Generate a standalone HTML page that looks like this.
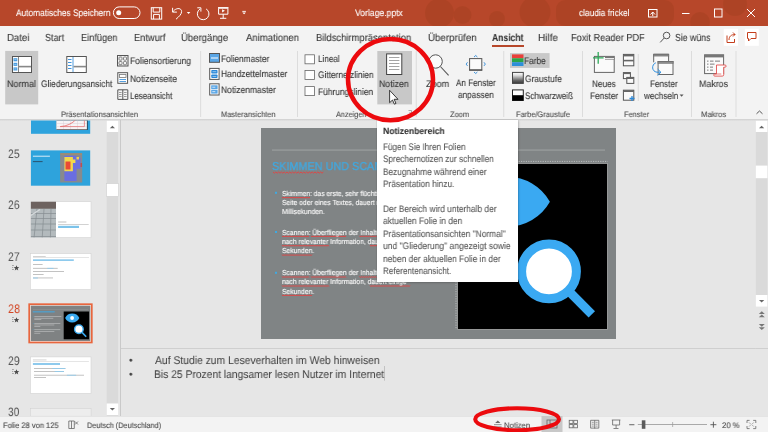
<!DOCTYPE html>
<html><head><meta charset="utf-8"><style>
html,body{margin:0;padding:0;width:768px;height:432px;overflow:hidden;background:#e6e6e6}
body{position:relative;font-family:"Liberation Sans",sans-serif}
.a{position:absolute}
.t{position:absolute;white-space:nowrap;line-height:1;font-family:"Liberation Sans",sans-serif;transform-origin:0 0;will-change:transform;-webkit-text-stroke:0.1px currentColor;text-rendering:geometricPrecision}
</style></head><body>

<svg class=a style="left:0;top:0" width="768" height="432" viewBox="0 0 768 432">
 <!-- title bar -->
 <rect x="0" y="0" width="768" height="26" fill="#b7472a"/>
 <g fill="#a3401f" opacity="0.45">
  <circle cx="439.5" cy="13" r="14.5"/><circle cx="462.5" cy="15" r="9"/><circle cx="497" cy="19" r="8"/>
  <circle cx="535" cy="12" r="15.5"/><rect x="556" y="0" width="118" height="26" rx="9"/>
  <circle cx="700" cy="22" r="10"/><circle cx="735" cy="4" r="12"/>
 </g>
 <!-- tabs + ribbon -->
 <!-- main bg -->
 <rect x="0" y="119" width="768" height="297" fill="#e6e6e6"/>
 <rect x="0" y="26" width="768" height="93" fill="#f3f3f3"/>
 <defs><linearGradient id="rsh" x1="0" y1="0" x2="0" y2="1"><stop offset="0" stop-color="#cfcfcf"/><stop offset="1" stop-color="#e6e6e6"/></linearGradient></defs>
 <rect x="0" y="119" width="768" height="2.2" fill="url(#rsh)"/>
 <!-- status bar -->
 <rect x="0" y="416" width="768" height="16" fill="#f3f3f3"/>
 <rect x="0" y="416" width="768" height="0.6" fill="#dadada"/>
 <rect x="541.5" y="416" width="21" height="16" fill="#c8c8c8"/>

 <!-- ===== title bar icons ===== -->
 <g fill="none" stroke="#fff" stroke-width="1">
  <rect x="113.4" y="6.9" width="26.6" height="11.6" rx="5.8"/>
  <rect x="151.3" y="7.7" width="10.4" height="11.4"/>
  <path d="M153.2 7.7 V12.1 H159.8 V7.7 M153.6 19.1 V14.4 H159.4 V19.1"/>
  <path d="M172.6 7.8 V12.1 H176.9 M172.6 12.1 C175.5 7.6 181.6 7.4 181.6 11.6 C181.6 14.2 179 16.6 176 19.2"/>
  <path d="M206.1 8.9 A5.8 5.8 0 1 1 199.9 9.1 M197.3 7.8 H200.9 V11.6"/>
  <path d="M218.6 14.2 V8.2 H227.9 V14.2 Z M223.2 14.2 v4 M220 18.3 h6.3"/>
  <path d="M682 13.5 h7.5"/>
  <rect x="714.5" y="9" width="7.5" height="8"/>
  <path d="M747 9 L755 17 M755 9 L747 17"/>
  <rect x="648.5" y="9.5" width="8.5" height="7.5"/>
  <path d="M650.5 14.5 L652.75 12 L655 14.5 M652.75 12 v4"/>
 </g>
 <circle cx="118.7" cy="12.7" r="2.5" fill="#fff"/>
 <path d="M186.8 12 h3.6 l-1.8 2z" fill="#fff"/>
 <path d="M222.1 9.3 v3.1 l2.8 -1.55z" fill="#fff"/>
 <rect x="218" y="7.1" width="10.5" height="1.1" fill="#fff"/>
 <rect x="242.3" y="10.9" width="3.6" height="0.9" fill="#fff"/><path d="M242.3 12.5 h3.6 l-1.8 1.8z" fill="#fff"/>

 <!-- ===== tabs row ===== -->
 <rect x="492" y="45" width="32" height="2" fill="#b7472a"/>
 <g fill="none" stroke="#555" stroke-width="1">
  <circle cx="666.6" cy="35.5" r="3.3"/>
  <path d="M664.2 38 L660.2 42.4"/>
 </g>
 <rect x="723.75" y="28.8" width="14.2" height="17" fill="#fff"/>
 <rect x="744.8" y="28.8" width="14" height="17" fill="#fff"/>
 <g fill="none" stroke="#c43e1c" stroke-width="1">
  <path d="M727 35.5 v7 h7.5 v-3.5"/>
  <path d="M729 40 C729 36.5 731 34.5 735 34.5 M733 32.5 l2 2 l-2 2"/>
  <path d="M747.5 32.5 h8.5 v6 h-5 l-2.5 2.5 v-2.5 h-1z"/>
 </g>

 <!-- ===== ribbon ===== -->
 <rect x="5.2" y="50.9" width="33" height="53.5" fill="#c8c8c8"/>
 <rect x="377.3" y="51" width="34.7" height="53.4" fill="#c8c8c8"/>
 <rect x="510" y="53.1" width="39.6" height="14.8" fill="#c8c8c8"/>
 <!-- separators -->
 <g fill="#d6d6d6">
  <rect x="200.3" y="51" width="0.8" height="66"/>
  <rect x="297.2" y="51" width="0.8" height="66"/>
  <rect x="415.8" y="51" width="0.8" height="66"/>
  <rect x="503.4" y="51" width="0.8" height="66"/>
  <rect x="582.2" y="51" width="0.8" height="66"/>
  <rect x="637.8" y="54" width="0.8" height="47"/>
  <rect x="691.1" y="51" width="0.8" height="66"/>
  <rect x="735.6" y="51" width="0.8" height="66"/>
 </g>
 <!-- Normal icon -->
 <rect x="12.5" y="56.5" width="19" height="16" fill="#fff" stroke="#555" stroke-width="1"/>
 <rect x="18" y="57" width="0.9" height="15" fill="#777"/>
 <rect x="18.5" y="65.8" width="12.5" height="1.6" fill="#888"/>
 <rect x="13.5" y="58.2" width="3.8" height="3.1" fill="#4a9de0"/>
 <rect x="13.5" y="62.8" width="3.8" height="3.1" fill="#4a9de0"/>
 <rect x="13.5" y="67.4" width="3.8" height="3.1" fill="#4a9de0"/>
 <g fill="#cfe6fa"><rect x="14.3" y="59.5" width="2.2" height="0.5"/><rect x="14.3" y="64.1" width="2.2" height="0.5"/><rect x="14.3" y="68.7" width="2.2" height="0.5"/></g>
 <!-- Gliederung icon -->
 <rect x="66.8" y="56.5" width="19.5" height="16" fill="#fff" stroke="#555" stroke-width="1"/>
 <rect x="72.6" y="57" width="0.8" height="15" fill="#2b88d8"/>
 <rect x="73.5" y="65.8" width="12.5" height="1.6" fill="#888"/>
 <g fill="#2b88d8"><rect x="68" y="59" width="3.5" height="0.9"/><rect x="68" y="62" width="3.5" height="0.9"/><rect x="68" y="65" width="3.5" height="0.9"/><rect x="68" y="68" width="3.5" height="0.9"/></g>
 <!-- Foliensortierung -->
 <rect x="117.5" y="55.5" width="10.5" height="10.5" fill="#f3f3f3" stroke="#555" stroke-width="1"/>
 <g fill="none" stroke="#666" stroke-width="0.8"><rect x="119" y="57" width="3" height="3.2" rx="0.8"/><rect x="123.5" y="57" width="3" height="3.2" rx="0.8"/><rect x="119" y="61.5" width="3" height="3.2" rx="0.8"/><rect x="123.5" y="61.5" width="3" height="3.2" rx="0.8"/></g>
 <!-- Notizenseite -->
 <rect x="117.8" y="72.7" width="9.8" height="10.6" fill="#fff" stroke="#555" stroke-width="1"/>
 <rect x="119.5" y="74.5" width="6.5" height="3" fill="#fff" stroke="#777" stroke-width="0.8"/>
 <rect x="119.5" y="79" width="6.5" height="0.8" fill="#2b88d8"/><rect x="119.5" y="81" width="6.5" height="0.8" fill="#2b88d8"/>
 <!-- Leseansicht -->
 <path d="M117.8 89.8 h10 v9.6 h-10z M122.8 89.8 v10.2" fill="#f6f6f6" stroke="#555" stroke-width="1"/>
 <g fill="#777"><rect x="119" y="92" width="2.6" height="0.7"/><rect x="119" y="94" width="2.6" height="0.7"/><rect x="119" y="96" width="2.6" height="0.7"/><rect x="124" y="92" width="2.6" height="0.7"/><rect x="124" y="94" width="2.6" height="0.7"/><rect x="124" y="96" width="2.6" height="0.7"/></g>
 <!-- Folienmaster -->
 <rect x="209.5" y="53.5" width="10" height="8.8" fill="#5aa6e6" stroke="#555" stroke-width="1"/>
 <rect x="211" y="57.5" width="7" height="1" fill="#fff"/>
 <!-- Handzettelmaster -->
 <rect x="209.7" y="68.4" width="9.4" height="11" fill="#fff" stroke="#555" stroke-width="1"/>
 <rect x="211.3" y="70" width="6.2" height="3.5" rx="0.7" fill="#2b88d8"/><rect x="211.3" y="74.5" width="6.2" height="3.5" rx="0.7" fill="#2b88d8"/>
 <g fill="#cfe5f7"><rect x="212.5" y="71.5" width="3.8" height="0.6"/><rect x="212.5" y="76" width="3.8" height="0.6"/></g>
 <!-- Notizenmaster -->
 <rect x="209.7" y="83.8" width="9.4" height="11.2" fill="#fff" stroke="#555" stroke-width="1"/>
 <rect x="211.2" y="85.3" width="6.4" height="4" fill="#5aa6e6"/><rect x="211.2" y="90" width="6.4" height="3.6" fill="#5aa6e6"/>
 <g fill="#fff"><rect x="212.3" y="86.8" width="3" height="0.7"/><rect x="212.3" y="91.4" width="3" height="0.7"/></g>
 <!-- checkboxes -->
 <g fill="#fff" stroke="#666" stroke-width="0.8">
  <rect x="305" y="54.8" width="9.4" height="9"/>
  <rect x="305" y="70.4" width="9.4" height="9"/>
  <rect x="305" y="86.6" width="9.4" height="9"/>
 </g>
 <!-- Notizen page icon -->
 <rect x="386.6" y="53.9" width="15.2" height="20.6" fill="#fff" stroke="#444" stroke-width="1"/>
 <g fill="#9a9a9a"><rect x="389" y="57" width="10.4" height="0.9"/><rect x="389" y="60" width="10.4" height="0.9"/><rect x="389" y="63" width="10.4" height="0.9"/><rect x="389" y="66" width="10.4" height="0.9"/><rect x="389" y="69" width="10.4" height="0.9"/></g>
 <!-- launcher -->
 <path d="M408.5 110.5 h3 v3 M409.5 112.5 l2 1" fill="none" stroke="#888" stroke-width="0.7"/>
 <!-- Zoom icon -->
 <circle cx="435.6" cy="61.5" r="6.7" fill="#fafafa" stroke="#555" stroke-width="1"/>
 <path d="M440.4 66.5 L448.6 75.4" stroke="#555" stroke-width="1.1"/>
 <!-- An Fenster -->
 <rect x="469.6" y="58.6" width="12.2" height="11.6" fill="#fafafa" stroke="#555" stroke-width="1"/>
 <rect x="469.2" y="69.3" width="13" height="1.3" fill="#555"/>
 <g fill="none" stroke="#2b88d8" stroke-width="0.9">
  <path d="M474 57 l1.7 -1.5 l1.7 1.5"/><path d="M474 72 l1.7 1.5 l1.7 -1.5"/>
  <path d="M467.5 62.3 l-1.3 1.8 l1.3 1.8"/><path d="M484 62.3 l1.3 1.8 l-1.3 1.8"/>
 </g>
 <!-- Farbe icons -->
 <rect x="512" y="54.4" width="11.5" height="3.9" fill="#e8403a"/>
 <rect x="512" y="58.3" width="11.5" height="3.9" fill="#2aa548"/>
 <rect x="512" y="62.2" width="11.5" height="3.8" fill="#2d8fd8"/>
 <defs><linearGradient id="gs" x1="0" y1="0" x2="0" y2="1">
  <stop offset="0" stop-color="#fff"/><stop offset="0.25" stop-color="#e0e0e0"/><stop offset="0.5" stop-color="#a0a0a0"/><stop offset="0.75" stop-color="#606060"/><stop offset="1" stop-color="#3a3a3a"/></linearGradient></defs>
 <rect x="512.5" y="72.4" width="10.8" height="11" fill="url(#gs)" stroke="#444" stroke-width="1"/>
 <rect x="512.5" y="89.9" width="10.8" height="10.6" fill="#fff" stroke="#222" stroke-width="1"/>
 <rect x="512.5" y="95.2" width="10.8" height="5.3" fill="#000"/>
 <!-- Neues Fenster -->
 <rect x="594.4" y="56.4" width="19.8" height="16" fill="#fafafa" stroke="#666" stroke-width="1"/>
 <rect x="605" y="56.4" width="9.5" height="3.2" fill="#777"/>
 <rect x="604" y="58" width="10" height="0.9" fill="#fafafa"/>
 <path d="M593 57.8 h10.6 M598.2 52 v11.7" stroke="#2faa5a" stroke-width="1.3"/>
 <!-- small window icons -->
 <g fill="#fafafa" stroke="#555" stroke-width="1">
  <rect x="623.4" y="54.4" width="10.4" height="11.4"/>
  <rect x="623.4" y="72.6" width="7" height="6"/>
  <rect x="626.8" y="77.4" width="7" height="6"/>
  <rect x="623.4" y="90.2" width="10.4" height="10"/>
 </g>
 <g fill="#666"><rect x="623.4" y="54.4" width="10.4" height="2"/><rect x="623.4" y="59.8" width="10.4" height="1.6"/>
  <rect x="623.4" y="72.6" width="7" height="1.5"/><rect x="626.8" y="77.4" width="7" height="1.6"/><rect x="623.4" y="90.2" width="10.4" height="1.8"/></g>
 <path d="M629.5 98.5 h5 M632 96 v5" stroke="#2b88d8" stroke-width="1.3"/>
 <!-- Fenster wechseln -->
 <path d="M653.7 62.3 V54.3 H668.6 V61.2" fill="#fafafa" stroke="#666" stroke-width="1"/>
 <rect x="653.2" y="53.8" width="15.9" height="2.6" fill="#707070"/>
 <rect x="653.9" y="54.9" width="14.5" height="0.5" fill="#a8a8a8"/>
 <rect x="658.1" y="61.5" width="14.9" height="13" fill="#fafafa" stroke="#666" stroke-width="1"/>
 <rect x="657.6" y="61" width="15.9" height="2.7" fill="#707070"/>
 <rect x="658.3" y="62.1" width="14.5" height="0.5" fill="#a8a8a8"/>
 <path d="M655.8 62.8 C651.3 64.6 651.5 71.6 657 72.2 H660.6" fill="none" stroke="#2b8ee0" stroke-width="1"/>
 <path d="M657.7 69.1 L660.8 72.2 L657.7 75.6" fill="none" stroke="#2b8ee0" stroke-width="1"/>
 <path d="M679.6 94.6 h4 l-2 2.2z" fill="#555"/>
 <!-- Makros -->
 <rect x="704.6" y="54.8" width="19" height="18.8" fill="#fafafa" stroke="#666" stroke-width="1"/>
 <rect x="704.6" y="54.8" width="19" height="2.6" fill="#777"/>
 <g fill="#999"><rect x="707" y="60.5" width="1.5" height="1.3"/><rect x="710" y="60.5" width="3.5" height="1.3"/><rect x="715" y="60.5" width="5" height="1.3"/>
  <rect x="707" y="63.5" width="1.5" height="1.3"/><rect x="710" y="63.5" width="4.5" height="1.3"/>
  <rect x="707" y="66.5" width="1.5" height="1.3"/><rect x="710" y="66.5" width="3" height="1.3"/>
  <rect x="707" y="69.5" width="1.5" height="1.3"/><rect x="710" y="69.5" width="3" height="1.3"/></g>
 <path d="M716.5 65 h8.5 a1.1 1.1 0 0 1 0 2.2 h-1.3 v7.5 a1.4 1.4 0 0 1 -1.4 1.4 h-7.5 a1.1 1.1 0 0 1 0 -2.2 h1.7z" fill="#fff" stroke="#e2504f" stroke-width="0.9"/><path d="M714.8 74 h6.5" stroke="#e2504f" stroke-width="0.7"/>
 <!-- collapse chevron -->
 <path d="M756.5 113.8 l3 -2.8 l3 2.8" fill="none" stroke="#555" stroke-width="1"/>

 <!-- ===== thumbnails panel ===== -->
 <rect x="106.7" y="120.8" width="11.5" height="295" fill="#dadada"/>
 <rect x="106.7" y="120.8" width="11.5" height="11.2" fill="#fff"/>
 <path d="M109.8 128.3 h5.2 l-2.6 -2.6z" fill="#666"/>
 <rect x="106.5" y="183.6" width="12" height="12.8" fill="#fff" stroke="#cfcfcf" stroke-width="0.6"/>
 <rect x="106.7" y="403.5" width="11.5" height="11.5" fill="#fff"/>
 <path d="M109.8 408 h5.2 l-2.6 2.6z" fill="#666"/>
 <rect x="120" y="120" width="0.9" height="296" fill="#c6c6c6"/>

 <!-- ===== editor scrollbar ===== -->
 <rect x="755.8" y="120.8" width="11.6" height="186" fill="#dadada"/>
 <rect x="755.8" y="120.8" width="11.6" height="11.2" fill="#fff"/>
 <path d="M759 128.3 h5.2 l-2.6 -2.6z" fill="#666"/>
 <rect x="755.8" y="165.6" width="11.6" height="12.6" fill="#fff"/>
 <rect x="755.8" y="295" width="11.6" height="11.7" fill="#fff"/>
 <path d="M759 300 h5.2 l-2.6 2.6z" fill="#666"/>
 <g fill="#777">
  <path d="M758.8 314 h6 l-3 -2.8z M758.8 317.3 h6 l-3 -2.8z"/>
  <path d="M758.8 324 h6 l-3 2.8z M758.8 327.3 h6 l-3 2.8z"/>
 </g>
 <rect x="384.3" y="366" width="0.6" height="14.7" fill="#aaaaaa"/>
 <!-- notes divider -->
 <rect x="121" y="348" width="634.8" height="1" fill="#cfcfcf"/>
 <rect x="755.8" y="348" width="12.2" height="1" fill="#cfcfcf"/>

 <!-- ===== status bar icons ===== -->
 <g fill="none" stroke="#666" stroke-width="0.8">
  <path d="M68.8 421 h5.5 v7.5 h-5.5z M71.5 421 v7.5"/>
  <path d="M75 421.5 l3 3 M78 421.5 l-3 3"/>
  <rect x="547" y="420" width="10" height="8"/>
  <path d="M550 420 v8 M550 424 h7"/>
  <rect x="569.2" y="420.3" width="3.8" height="3.2"/><rect x="573.8" y="420.3" width="3.8" height="3.2"/>
  <rect x="569.2" y="424.6" width="3.8" height="3.2"/><rect x="573.8" y="424.6" width="3.8" height="3.2"/>
  <path d="M590.6 420.3 h8.2 v7.8 h-8.2z M594.7 420.3 v8.2"/>
  <path d="M591.8 422.3 h2 M591.8 424.2 h2 M591.8 426.1 h2 M595.6 422.3 h2 M595.6 424.2 h2 M595.6 426.1 h2" stroke-width="0.6"/>
  <path d="M611.8 420 h8.6 M612.6 420 v5 h7 v-5 M616.1 425 v3 M613.5 428.5 h5"/>
 </g>
 <path d="M494 424.5 h7.6 M494 426.3 h7.6 M494 428 h7.6" stroke="#666" stroke-width="0.6"/>
 <path d="M495.2 423 l2.6 -2.4 l2.6 2.4z" fill="#666"/>
 <rect x="629.2" y="424.3" width="5.2" height="0.9" fill="#555"/>
 <rect x="637.8" y="424.3" width="69.2" height="0.7" fill="#888"/>
 <rect x="672.4" y="422" width="0.7" height="5" fill="#999"/>
 <rect x="641.8" y="420.3" width="3.6" height="8.5" fill="#5a5a5a"/>
 <path d="M710.4 424.7 h6 M713.4 421.7 v6" stroke="#555" stroke-width="0.9"/>
 <path d="M747 423 v-2.6 h2.6 M753.2 420.4 h2.6 v2.6 M755.8 426 v2.6 h-2.6 M749.6 428.6 h-2.6 v-2.6" fill="none" stroke="#666" stroke-width="0.8"/>
 <path d="M749 422.4 l1.8 1.8 M753.8 422.4 l-1.8 1.8 M749 426.6 l1.8 -1.8 M753.8 426.6 l-1.8 -1.8" stroke="#777" stroke-width="0.6"/>
</svg>

<svg class=a style="left:0;top:0" width="768" height="432" viewBox="0 0 768 432">
 <defs><clipPath id="panelclip"><rect x="0" y="120.6" width="106" height="295.4"/></clipPath></defs>
 <g clip-path="url(#panelclip)">
 <!-- slide 24 (partial) -->
 <rect x="31" y="120" width="59.2" height="13.8" fill="#2ea3dd"/>
 <rect x="56.6" y="119" width="31" height="11" fill="#2a2a2a"/>
 <rect x="56.3" y="119" width="30.6" height="10.4" fill="#f6f4f6"/>
 <g stroke="#d8c8d0" stroke-width="0.4"><path d="M63.5 119v10 M70.5 119v10 M77.5 119v10 M57 123.5h30 M57 126.5h30"/></g>
 <path d="M60.2 126.6 Q70 126 76.3 119.2" stroke="#e86a6a" stroke-width="0.8" fill="none"/>
 <path d="M60.2 126.6 H84.4 V119" stroke="#e86a6a" stroke-width="0.7" fill="none"/>
 <!-- slide 25 -->
 <rect x="30.9" y="150.4" width="59.3" height="35.3" fill="#2ea3dc"/>
 <rect x="60.1" y="153" width="22.1" height="29.5" fill="#878a8e"/>
 <defs><filter id="bl6" x="-20%" y="-20%" width="140%" height="140%"><feGaussianBlur stdDeviation="0.7"/></filter><clipPath id="hmclip"><rect x="60.1" y="153" width="22.1" height="29.5"/></clipPath></defs>
 <g clip-path="url(#hmclip)"><g filter="url(#bl6)">
 <path d="M64.4 155.7 h12.2 v2 h4 v11 h-4 v12.3 h-12.2z" fill="#6a6ee0"/>
 <rect x="60.5" y="153.2" width="21.5" height="1.8" fill="#9c8c74"/>
 <path d="M64.4 157 h8.5 v2.5 h2.5 v3.5 h-2.5 v8.3 h-8.5z" fill="#f2d84c"/>
 <rect x="65.5" y="161.5" width="5" height="8" fill="#ea4a36"/>
 <rect x="76.5" y="157" width="2.5" height="2.5" fill="#f0d24a"/>
 <rect x="80.5" y="163" width="1.8" height="4" fill="#c05050"/>
 </g></g>
 <rect x="32.9" y="155.7" width="17" height="1" fill="#d8ecf8"/>
 <rect x="32.9" y="161.1" width="9.7" height="1" fill="#2a5570"/>
 <!-- slide 26 -->
 <rect x="30.9" y="201.7" width="60.1" height="35.9" fill="#fff" stroke="#d2d2d2" stroke-width="0.6"/>
 <defs><linearGradient id="kb" x1="0" y1="0" x2="0.2" y2="1"><stop offset="0" stop-color="#9aa2a6"/><stop offset="0.5" stop-color="#b4bbbe"/><stop offset="1" stop-color="#a0a7aa"/></linearGradient></defs>
 <defs><clipPath id="kbclip"><rect x="30.9" y="201.7" width="25.1" height="35.9"/></clipPath><filter id="bl5" x="-20%" y="-20%" width="140%" height="140%"><feGaussianBlur stdDeviation="0.45"/></filter></defs>
 <g clip-path="url(#kbclip)"><g filter="url(#bl5)">
 <rect x="30" y="201" width="27" height="37" fill="#b3babd"/>
 <g stroke="#858d91" stroke-width="0.7" fill="none"><path d="M30 213.5 h27 M30 218.5 h27 M30 224 h27 M30 230 h27 M30 236.5 h27"/><path d="M37 209 l-3 29 M44 209 l-1.8 29 M51 209 l-0.6 29"/></g>
 <path d="M30 216 L40 209.5" stroke="#d5dadc" stroke-width="1.3"/>
 <rect x="30" y="201" width="27" height="7.7" fill="#6d625e"/>
 </g></g>
 <rect x="58.1" y="221.6" width="8.3" height="0.8" fill="#b0b0b0"/>
 <rect x="58.1" y="224" width="30.6" height="0.45" fill="#9a9a9a"/>
 <rect x="58.1" y="225.8" width="20.9" height="2.2" fill="#7cc3ea"/>
 <!-- slide 27 -->
 <rect x="30.3" y="253.6" width="60.7" height="36" fill="#fff" stroke="#d2d2d2" stroke-width="0.6"/>
 <rect x="33" y="256.2" width="12.7" height="0.7" fill="#c0c0c0"/>
 <rect x="33" y="257.4" width="56" height="0.35" fill="#b5b5b5"/>
 <rect x="33" y="259.5" width="40.8" height="1.2" fill="#5fb4e6"/>
 <g fill="#a8a8a8"><rect x="33" y="264.3" width="9.6" height="0.7"/><rect x="33" y="267.9" width="24.7" height="0.7"/><rect x="33" y="271.3" width="31" height="0.7"/><rect x="33" y="274.2" width="10.6" height="0.7"/><rect x="33" y="277.6" width="20" height="0.7"/></g>
 <g fill="#8ccbef"><rect x="47.3" y="267.9" width="6.2" height="0.8"/><rect x="33" y="277.6" width="4.9" height="0.8"/></g>
 <!-- slide 28 selected -->
 <rect x="29.2" y="304.2" width="62.6" height="38.3" fill="#f4e6e0" stroke="#e8663e" stroke-width="1.7"/>
 <rect x="30.8" y="305.7" width="59.5" height="35.3" fill="#7f8283"/>
 <rect x="33" y="309" width="55" height="0.4" fill="#999c9d"/>
 <rect x="32.8" y="311.3" width="21.9" height="1.1" fill="#45a6dc"/>
 <g fill="#c9cbcb"><rect x="34.3" y="316.4" width="27" height="0.55"/><rect x="34.3" y="317.9" width="19" height="0.55"/><rect x="34.3" y="319.4" width="7" height="0.55"/>
  <rect x="34.3" y="323.2" width="26" height="0.55"/><rect x="34.3" y="324.7" width="20" height="0.55"/><rect x="34.3" y="326.2" width="6" height="0.55"/>
  <rect x="34.3" y="329.5" width="26" height="0.55"/><rect x="34.3" y="331" width="20" height="0.55"/><rect x="34.3" y="332.9" width="6" height="0.55"/></g>
 <g fill="#45a6dc"><rect x="33.2" y="316.3" width="0.6" height="0.6"/><rect x="33.2" y="323.1" width="0.6" height="0.6"/><rect x="33.2" y="329.4" width="0.6" height="0.6"/></g>
 <rect x="63.7" y="311.5" width="25.4" height="27.8" fill="#000"/>
 <path d="M65.1 318 A7.9 7.9 0 0 1 79.3 318 A7.9 7.9 0 0 1 65.1 318z" fill="#3aaaf0"/>
 <circle cx="72.1" cy="318" r="1.9" fill="#fff"/>
 <circle cx="78.9" cy="329.2" r="4.3" fill="#fff" stroke="#3aaaf0" stroke-width="1.4"/>
 <path d="M82 332.4 L86.2 336.8" stroke="#3aaaf0" stroke-width="1.6"/>
 <!-- slide 29 -->
 <rect x="30.4" y="356.9" width="60.6" height="36.5" fill="#fff" stroke="#d2d2d2" stroke-width="0.6"/>
 <rect x="32.9" y="359.6" width="13.6" height="0.7" fill="#c0c0c0"/>
 <rect x="32.9" y="361.1" width="56" height="0.35" fill="#b5b5b5"/>
 <rect x="32.9" y="363.3" width="27.1" height="1.4" fill="#5fb4e6"/>
 <g fill="#a8a8a8"><rect x="34" y="368.1" width="31.4" height="0.7"/><rect x="34" y="371.2" width="30" height="0.7"/><rect x="34" y="374.8" width="50" height="0.7"/><rect x="34" y="377" width="12" height="0.7"/></g>
 <g fill="#8ccbef"><rect x="52.3" y="368.1" width="13.1" height="0.8"/><rect x="54.7" y="371.2" width="9.3" height="0.8"/><rect x="66.9" y="374.8" width="9.2" height="0.8"/></g>
 <!-- slide 30 partial -->
 <rect x="30.3" y="408.7" width="60.8" height="7.5" fill="#ededed" stroke="#d0d0d0" stroke-width="0.5"/>
 </g>
 <!-- stars -->
 <path d="M16.50 265.20 L17.23 267.09 L19.26 267.20 L17.69 268.49 L18.20 270.45 L16.50 269.35 L14.80 270.45 L15.31 268.49 L13.74 267.20 L15.77 267.09z M16.50 317.20 L17.23 319.09 L19.26 319.20 L17.69 320.49 L18.20 322.45 L16.50 321.35 L14.80 322.45 L15.31 320.49 L13.74 319.20 L15.77 319.09z M16.50 369.20 L17.23 371.09 L19.26 371.20 L17.69 372.49 L18.20 374.45 L16.50 373.35 L14.80 374.45 L15.31 372.49 L13.74 371.20 L15.77 371.09z" fill="#4a4a4a"/>
 <g fill="#8a8a8a"><rect x="12" y="265.2" width="1.9" height="0.7"/><rect x="12" y="267.1" width="1.2" height="0.7"/><rect x="12" y="269" width="1.9" height="0.7"/><rect x="12" y="317.2" width="1.9" height="0.7"/><rect x="12" y="319.1" width="1.2" height="0.7"/><rect x="12" y="321" width="1.9" height="0.7"/><rect x="12" y="369.2" width="1.9" height="0.7"/><rect x="12" y="371.1" width="1.2" height="0.7"/><rect x="12" y="373" width="1.9" height="0.7"/></g>
</svg>
<div class=t style="left:15.50px;top:8.96px;font-size:9.50px;transform:scaleX(0.8769);color:#ffffff;">Automatisches Speichern</div>
<div class=t style="left:355.00px;top:8.96px;font-size:9.50px;transform:scaleX(0.9057);color:#ffffff;">Vorlage.pptx</div>
<div class=t style="left:579.42px;top:8.96px;font-size:9.50px;transform:scaleX(0.8748);color:#ffffff;">claudia frickel</div>
<div class=t style="left:7.23px;top:33.77px;font-size:10.20px;transform:scaleX(0.9436);color:#383838;">Datei</div>
<div class=t style="left:45.39px;top:33.77px;font-size:10.20px;transform:scaleX(0.8863);color:#383838;">Start</div>
<div class=t style="left:81.01px;top:33.77px;font-size:10.20px;transform:scaleX(0.9067);color:#383838;">Einfügen</div>
<div class=t style="left:134.26px;top:33.77px;font-size:10.20px;transform:scaleX(0.9102);color:#383838;">Entwurf</div>
<div class=t style="left:181.33px;top:33.77px;font-size:10.20px;transform:scaleX(0.9364);color:#383838;">Übergänge</div>
<div class=t style="left:245.75px;top:33.77px;font-size:10.20px;transform:scaleX(0.9353);color:#383838;">Animationen</div>
<div class=t style="left:316.25px;top:33.77px;font-size:10.20px;transform:scaleX(0.9235);color:#383838;">Bildschirmpräsentation</div>
<div class=t style="left:428.32px;top:33.77px;font-size:10.20px;transform:scaleX(0.9549);color:#383838;">Überprüfen</div>
<div class=t style="left:538.20px;top:33.77px;font-size:10.20px;transform:scaleX(0.9755);color:#383838;">Hilfe</div>
<div class=t style="left:571.26px;top:33.77px;font-size:10.20px;transform:scaleX(0.9038);color:#383838;">Foxit Reader PDF</div>
<div class=t style="left:675.45px;top:33.77px;font-size:10.20px;transform:scaleX(0.8580);color:#383838;">Sie wüns</div>
<div class=t style="left:492.08px;top:33.77px;font-size:10.20px;transform:scaleX(0.8408);color:#333;font-weight:700;">Ansicht</div>
<div class=t style="left:6.98px;top:79.86px;font-size:9.50px;transform:scaleX(0.9465);color:#383838;">Normal</div>
<div class=t style="left:40.58px;top:79.86px;font-size:9.50px;transform:scaleX(0.8767);color:#383838;">Gliederungsansicht</div>
<div class=t style="left:129.52px;top:57.36px;font-size:9.50px;transform:scaleX(0.8979);color:#383838;">Foliensortierung</div>
<div class=t style="left:129.52px;top:74.66px;font-size:9.50px;transform:scaleX(0.8999);color:#383838;">Notizenseite</div>
<div class=t style="left:129.57px;top:91.91px;font-size:9.50px;transform:scaleX(0.8346);color:#383838;">Leseansicht</div>
<div class=t style="left:61.31px;top:111.03px;font-size:8.00px;transform:scaleX(0.9260);color:#4e4e4e;">Präsentationsansichten</div>
<div class=t style="left:221.23px;top:54.86px;font-size:9.50px;transform:scaleX(0.8792);color:#383838;">Folienmaster</div>
<div class=t style="left:221.22px;top:70.46px;font-size:9.50px;transform:scaleX(0.8917);color:#383838;">Handzettelmaster</div>
<div class=t style="left:221.22px;top:86.06px;font-size:9.50px;transform:scaleX(0.8963);color:#383838;">Notizenmaster</div>
<div class=t style="left:221.31px;top:110.83px;font-size:8.00px;transform:scaleX(0.9287);color:#4e4e4e;">Masteransichten</div>
<div class=t style="left:318.10px;top:55.26px;font-size:9.50px;transform:scaleX(0.8519);color:#383838;">Lineal</div>
<div class=t style="left:318.33px;top:71.46px;font-size:9.50px;transform:scaleX(0.8780);color:#383838;">Gitternetzlinien</div>
<div class=t style="left:318.08px;top:87.76px;font-size:9.50px;transform:scaleX(0.8857);color:#383838;">Führungslinien</div>
<div class=t style="left:335.81px;top:111.23px;font-size:8.00px;transform:scaleX(0.9125);color:#4e4e4e;">Anzeigen</div>
<div class=t style="left:379.10px;top:80.06px;font-size:9.50px;transform:scaleX(0.9186);color:#383838;">Notizen</div>
<div class=t style="left:426.03px;top:80.06px;font-size:9.50px;transform:scaleX(0.9615);color:#383838;">Zoom</div>
<div class=t style="left:455.90px;top:79.36px;font-size:9.50px;transform:scaleX(0.8545);color:#383838;">An Fenster</div>
<div class=t style="left:457.87px;top:91.26px;font-size:9.50px;transform:scaleX(0.8663);color:#383838;">anpassen</div>
<div class=t style="left:450.17px;top:111.23px;font-size:8.00px;transform:scaleX(0.9388);color:#4e4e4e;">Zoom</div>
<div class=t style="left:524.33px;top:57.26px;font-size:9.50px;transform:scaleX(0.8771);color:#383838;">Farbe</div>
<div class=t style="left:524.58px;top:74.66px;font-size:9.50px;transform:scaleX(0.8827);color:#383838;">Graustufe</div>
<div class=t style="left:524.68px;top:91.76px;font-size:9.50px;transform:scaleX(0.8489);color:#383838;">Schwarzweiß</div>
<div class=t style="left:516.21px;top:111.43px;font-size:8.00px;transform:scaleX(0.9281);color:#4e4e4e;">Farbe/Graustufe</div>
<div class=t style="left:592.04px;top:80.16px;font-size:9.50px;transform:scaleX(0.8631);color:#383838;">Neues</div>
<div class=t style="left:589.83px;top:91.91px;font-size:9.50px;transform:scaleX(0.8780);color:#383838;">Fenster</div>
<div class=t style="left:649.85px;top:80.16px;font-size:9.50px;transform:scaleX(0.8588);color:#383838;">Fenster</div>
<div class=t style="left:643.78px;top:91.91px;font-size:9.50px;transform:scaleX(0.8655);color:#383838;">wechseln</div>
<div class=t style="left:624.21px;top:110.63px;font-size:8.00px;transform:scaleX(0.9288);color:#4e4e4e;">Fenster</div>
<div class=t style="left:699.29px;top:80.16px;font-size:9.50px;transform:scaleX(0.9303);color:#383838;">Makros</div>
<div class=t style="left:701.08px;top:110.63px;font-size:8.00px;transform:scaleX(0.9627);color:#4e4e4e;">Makros</div>
<div class=t style="left:8.08px;top:147.71px;font-size:12.40px;transform:scaleX(0.8333);color:#555;-webkit-text-stroke:0;">25</div>
<div class=t style="left:8.08px;top:199.21px;font-size:12.40px;transform:scaleX(0.8333);color:#555;-webkit-text-stroke:0;">26</div>
<div class=t style="left:8.08px;top:251.20px;font-size:12.52px;transform:scaleX(0.8333);color:#555;-webkit-text-stroke:0;">27</div>
<div class=t style="left:8.08px;top:354.60px;font-size:12.52px;transform:scaleX(0.8333);color:#555;-webkit-text-stroke:0;">29</div>
<div class=t style="left:8.30px;top:406.41px;font-size:12.16px;transform:scaleX(0.8333);color:#555;-webkit-text-stroke:0;">30</div>
<div class=t style="left:8.06px;top:303.17px;font-size:12.44px;transform:scaleX(0.8696);color:#d24726;-webkit-text-stroke:0;">28</div>
<div class=t style="left:128.98px;top:355.61px;font-size:11.33px;transform:scaleX(0.9091);color:#444;">•</div>
<div class=t style="left:128.98px;top:369.81px;font-size:11.33px;transform:scaleX(0.9091);color:#444;">•</div>
<div class=t style="left:154.60px;top:355.72px;font-size:11.20px;transform:scaleX(0.9246);color:#444;-webkit-text-stroke:0.04px currentColor;">Auf Studie zum Leseverhalten im Web hinweisen</div>
<div class=t style="left:153.78px;top:370.12px;font-size:11.20px;transform:scaleX(0.9207);color:#444;-webkit-text-stroke:0.04px currentColor;">Bis 25 Prozent langsamer lesen Nutzer im Internet</div>
<div class=t style="left:2.70px;top:421.93px;font-size:8.00px;transform:scaleX(0.9395);color:#484848;">Folie 28 von 125</div>
<div class=t style="left:87.32px;top:421.93px;font-size:8.00px;transform:scaleX(0.9103);color:#484848;">Deutsch (Deutschland)</div>
<div class=t style="left:504.19px;top:421.93px;font-size:8.00px;transform:scaleX(0.9602);color:#484848;">Notizen</div>
<div class=t style="left:721.61px;top:421.93px;font-size:8.00px;transform:scaleX(0.9658);color:#484848;">20 %</div>

<div class=a style="left:261px;top:128px;width:355.2px;height:210.8px;background:#808485;overflow:hidden">
 <svg class=a style="left:0;top:0" width="356" height="211" viewBox="261 128 356 211">
  <rect x="272" y="149.6" width="333" height="0.9" fill="#a4a7a8"/>
  <rect x="457.6" y="163.4" width="149.8" height="166" fill="#000" stroke="#a9abab" stroke-width="0.8"/>
  <path d="M456.2 161.4 H607.8 M456 161.4 V329.5" stroke="#c8caca" stroke-width="0.8" stroke-dasharray="1.2 1.2" fill="none"/>
  <path d="M464.8 201.7 A48.75 48.75 0 0 1 549.9 201.7 A48.75 48.75 0 0 1 464.8 201.7z" fill="#3aa9f2"/>
  <circle cx="549" cy="271.4" r="27.4" fill="#fff" stroke="#3aa9f2" stroke-width="9"/>
  <path d="M570 292.4 L591.8 314.4" stroke="#3aa9f2" stroke-width="9"/>
  <path d="M273.00 172.00 L274.40 173.20 L275.80 172.00 L277.20 173.20 L278.60 172.00 L280.00 173.20 L281.40 172.00 L282.80 173.20 L284.20 172.00 L285.60 173.20 L287.00 172.00 L288.40 173.20 L289.80 172.00 L291.20 173.20 L292.60 172.00 L294.00 173.20 L295.40 172.00 L296.80 173.20 L298.20 172.00 L299.60 173.20 L301.00 172.00 L302.40 173.20 L303.80 172.00 L305.20 173.20 L306.60 172.00 L308.00 173.20 L309.40 172.00 L310.80 173.20 L312.20 172.00 L313.60 173.20 L315.00 172.00 L316.40 173.20 L317.80 172.00 L319.20 173.20 L320.60 172.00 L322.00 173.20 L323.40 172.00 M281.90 197.05 L282.90 198.15 L283.90 197.05 L284.90 198.15 L285.90 197.05 L286.90 198.15 L287.90 197.05 L288.90 198.15 L289.90 197.05 L290.90 198.15 L291.90 197.05 L292.90 198.15 L293.90 197.05 L294.90 198.15 L295.90 197.05 L296.90 198.15 L297.90 197.05 L298.90 198.15 L299.90 197.05 L300.90 198.15 L301.90 197.05 L302.90 198.15 L303.90 197.05 L304.90 198.15 L305.90 197.05 L306.90 198.15 L307.90 197.05 L308.90 198.15 L309.90 197.05 M282.00 235.85 L283.00 236.95 L284.00 235.85 L285.00 236.95 L286.00 235.85 L287.00 236.95 L288.00 235.85 L289.00 236.95 L290.00 235.85 L291.00 236.95 L292.00 235.85 L293.00 236.95 L294.00 235.85 L295.00 236.95 L296.00 235.85 L297.00 236.95 L298.00 235.85 L299.00 236.95 L300.00 235.85 L301.00 236.95 L302.00 235.85 L303.00 236.95 L304.00 235.85 L305.00 236.95 L306.00 235.85 L307.00 236.95 L308.00 235.85 L309.00 236.95 M311.00 235.85 L312.00 236.95 L313.00 235.85 L314.00 236.95 L315.00 235.85 L316.00 236.95 L317.00 235.85 L318.00 236.95 L319.00 235.85 L320.00 236.95 L321.00 235.85 L322.00 236.95 L323.00 235.85 L324.00 236.95 L325.00 235.85 L326.00 236.95 L327.00 235.85 L328.00 236.95 L329.00 235.85 L330.00 236.95 L331.00 235.85 L332.00 236.95 L333.00 235.85 L334.00 236.95 L335.00 235.85 L336.00 236.95 L337.00 235.85 L338.00 236.95 L339.00 235.85 L340.00 236.95 L341.00 235.85 L342.00 236.95 L343.00 235.85 L344.00 236.95 L345.00 235.85 L346.00 236.95 M359.40 235.85 L360.40 236.95 L361.40 235.85 L362.40 236.95 L363.40 235.85 L364.40 236.95 L365.40 235.85 L366.40 236.95 L367.40 235.85 L368.40 236.95 L369.40 235.85 L370.40 236.95 L371.40 235.85 L372.40 236.95 L373.40 235.85 L374.40 236.95 L375.40 235.85 L376.40 236.95 M282.00 245.15 L283.00 246.25 L284.00 245.15 L285.00 246.25 L286.00 245.15 L287.00 246.25 L288.00 245.15 L289.00 246.25 L290.00 245.15 L291.00 246.25 L292.00 245.15 L293.00 246.25 L294.00 245.15 L295.00 246.25 L296.00 245.15 L297.00 246.25 L298.00 245.15 L299.00 246.25 L300.00 245.15 L301.00 246.25 L302.00 245.15 L303.00 246.25 L304.00 245.15 L305.00 246.25 L306.00 245.15 L307.00 246.25 L308.00 245.15 L309.00 246.25 L310.00 245.15 L311.00 246.25 L312.00 245.15 L313.00 246.25 L314.00 245.15 L315.00 246.25 L316.00 245.15 L317.00 246.25 L318.00 245.15 L319.00 246.25 L320.00 245.15 L321.00 246.25 L322.00 245.15 L323.00 246.25 L324.00 245.15 L325.00 246.25 L326.00 245.15 L327.00 246.25 L328.00 245.15 L329.00 246.25 M370.00 245.15 L371.00 246.25 L372.00 245.15 L373.00 246.25 L374.00 245.15 L375.00 246.25 L376.00 245.15 L377.00 246.25 M282.00 254.55 L283.00 255.65 L284.00 254.55 L285.00 255.65 L286.00 254.55 L287.00 255.65 L288.00 254.55 L289.00 255.65 L290.00 254.55 L291.00 255.65 L292.00 254.55 L293.00 255.65 L294.00 254.55 L295.00 255.65 L296.00 254.55 L297.00 255.65 L298.00 254.55 L299.00 255.65 L300.00 254.55 L301.00 255.65 L302.00 254.55 L303.00 255.65 L304.00 254.55 L305.00 255.65 L306.00 254.55 L307.00 255.65 L308.00 254.55 L309.00 255.65 L310.00 254.55 L311.00 255.65 L312.00 254.55 M282.00 276.45 L283.00 277.55 L284.00 276.45 L285.00 277.55 L286.00 276.45 L287.00 277.55 L288.00 276.45 L289.00 277.55 L290.00 276.45 L291.00 277.55 L292.00 276.45 L293.00 277.55 L294.00 276.45 L295.00 277.55 L296.00 276.45 L297.00 277.55 L298.00 276.45 L299.00 277.55 L300.00 276.45 L301.00 277.55 L302.00 276.45 L303.00 277.55 L304.00 276.45 L305.00 277.55 L306.00 276.45 L307.00 277.55 L308.00 276.45 L309.00 277.55 M311.00 276.45 L312.00 277.55 L313.00 276.45 L314.00 277.55 L315.00 276.45 L316.00 277.55 L317.00 276.45 L318.00 277.55 L319.00 276.45 L320.00 277.55 L321.00 276.45 L322.00 277.55 L323.00 276.45 L324.00 277.55 L325.00 276.45 L326.00 277.55 L327.00 276.45 L328.00 277.55 L329.00 276.45 L330.00 277.55 L331.00 276.45 L332.00 277.55 L333.00 276.45 L334.00 277.55 L335.00 276.45 L336.00 277.55 L337.00 276.45 L338.00 277.55 L339.00 276.45 L340.00 277.55 L341.00 276.45 L342.00 277.55 L343.00 276.45 L344.00 277.55 L345.00 276.45 L346.00 277.55 M359.40 276.45 L360.40 277.55 L361.40 276.45 L362.40 277.55 L363.40 276.45 L364.40 277.55 L365.40 276.45 L366.40 277.55 L367.40 276.45 L368.40 277.55 L369.40 276.45 L370.40 277.55 L371.40 276.45 L372.40 277.55 L373.40 276.45 L374.40 277.55 L375.40 276.45 L376.40 277.55 M282.00 285.45 L283.00 286.55 L284.00 285.45 L285.00 286.55 L286.00 285.45 L287.00 286.55 L288.00 285.45 L289.00 286.55 L290.00 285.45 L291.00 286.55 L292.00 285.45 L293.00 286.55 L294.00 285.45 L295.00 286.55 L296.00 285.45 L297.00 286.55 L298.00 285.45 L299.00 286.55 L300.00 285.45 L301.00 286.55 L302.00 285.45 L303.00 286.55 L304.00 285.45 L305.00 286.55 L306.00 285.45 L307.00 286.55 L308.00 285.45 L309.00 286.55 L310.00 285.45 L311.00 286.55 L312.00 285.45 L313.00 286.55 L314.00 285.45 L315.00 286.55 L316.00 285.45 L317.00 286.55 L318.00 285.45 L319.00 286.55 L320.00 285.45 L321.00 286.55 L322.00 285.45 L323.00 286.55 L324.00 285.45 L325.00 286.55 L326.00 285.45 L327.00 286.55 L328.00 285.45 L329.00 286.55 M370.00 285.45 L371.00 286.55 L372.00 285.45 L373.00 286.55 L374.00 285.45 L375.00 286.55 L376.00 285.45 L377.00 286.55 L378.00 285.45 L379.00 286.55 L380.00 285.45 L381.00 286.55 L382.00 285.45 L383.00 286.55 L384.00 285.45 L385.00 286.55 L386.00 285.45 L387.00 286.55 L388.00 285.45 L389.00 286.55 L390.00 285.45 L391.00 286.55 L392.00 285.45 L393.00 286.55 L394.00 285.45 L395.00 286.55 L396.00 285.45 L397.00 286.55 L398.00 285.45 L399.00 286.55 L400.00 285.45 L401.00 286.55 L402.00 285.45 L403.00 286.55 L404.00 285.45 L405.00 286.55 L406.00 285.45 L407.00 286.55 L408.00 285.45 L409.00 286.55 L410.00 285.45 M282.00 294.85 L283.00 295.95 L284.00 294.85 L285.00 295.95 L286.00 294.85 L287.00 295.95 L288.00 294.85 L289.00 295.95 L290.00 294.85 L291.00 295.95 L292.00 294.85 L293.00 295.95 L294.00 294.85 L295.00 295.95 L296.00 294.85 L297.00 295.95 L298.00 294.85 L299.00 295.95 L300.00 294.85 L301.00 295.95 L302.00 294.85 L303.00 295.95 L304.00 294.85 L305.00 295.95 L306.00 294.85 L307.00 295.95 L308.00 294.85 L309.00 295.95 L310.00 294.85 L311.00 295.95 L312.00 294.85" fill="none" stroke="#e04545" stroke-width="0.95"/>
  <g fill="#3fa9e1"><rect x="275" y="191.8" width="2" height="2"/><rect x="275" y="231" width="2" height="2"/><rect x="275" y="271.8" width="2" height="2"/></g>
 </svg>
 <div class=a style="left:-261px;top:-128px;width:768px;height:432px">
 <div class=t style="left:272.35px;top:162.07px;font-size:11.38px;transform:scaleX(0.9524);color:#3fa9e1;-webkit-text-stroke:0.3px currentColor;">SKIMMEN UND SCANNEN</div>
<div class=t style="left:281.50px;top:189.85px;font-size:7.27px;transform:scaleX(0.9259);color:#fbfbfb;-webkit-text-stroke:0.1px currentColor;">Skimmen: das erste, sehr flüchtige Betrachten einer</div>
<div class=t style="left:281.50px;top:199.25px;font-size:7.27px;transform:scaleX(0.9259);color:#fbfbfb;-webkit-text-stroke:0.1px currentColor;">Seite oder eines Textes, dauert nur wenige</div>
<div class=t style="left:281.50px;top:208.25px;font-size:7.27px;transform:scaleX(0.9259);color:#fbfbfb;-webkit-text-stroke:0.1px currentColor;">Millisekunden.</div>
<div class=t style="left:281.50px;top:228.65px;font-size:7.27px;transform:scaleX(0.9259);color:#fbfbfb;-webkit-text-stroke:0.1px currentColor;">Scannen: Überfliegen der Inhalte einer Seite</div>
<div class=t style="left:281.50px;top:238.00px;font-size:7.27px;transform:scaleX(0.9259);color:#fbfbfb;-webkit-text-stroke:0.1px currentColor;">nach relevanter Information, dauert einige</div>
<div class=t style="left:281.50px;top:247.35px;font-size:7.27px;transform:scaleX(0.9259);color:#fbfbfb;-webkit-text-stroke:0.1px currentColor;">Sekunden.</div>
<div class=t style="left:281.50px;top:269.25px;font-size:7.27px;transform:scaleX(0.9259);color:#fbfbfb;-webkit-text-stroke:0.1px currentColor;">Scannen: Überfliegen der Inhalte einer Seite</div>
<div class=t style="left:281.50px;top:278.25px;font-size:7.27px;transform:scaleX(0.9259);color:#fbfbfb;-webkit-text-stroke:0.1px currentColor;">nach relevanter Information, dauert einige</div>
<div class=t style="left:281.50px;top:287.65px;font-size:7.27px;transform:scaleX(0.9259);color:#fbfbfb;-webkit-text-stroke:0.1px currentColor;">Sekunden.</div>
 </div>
</div>

<div class=a style="left:377px;top:119.7px;width:140.7px;height:162.3px;background:#fff;box-shadow:0 0 1.5px rgba(0,0,0,0.25), 1px 1px 2px rgba(0,0,0,0.15)">
 <div class=a style="left:-377px;top:-119.7px;width:768px;height:432px">
 <div class=t style="left:382.78px;top:126.58px;font-size:9.00px;transform:scaleX(0.9570);color:#333;font-weight:700;">Notizenbereich</div>
<div class=t style="left:382.65px;top:142.76px;font-size:9.50px;transform:scaleX(0.8595);color:#5a5a5a;">Fügen Sie Ihren Folien</div>
<div class=t style="left:382.97px;top:155.26px;font-size:9.50px;transform:scaleX(0.8669);color:#5a5a5a;">Sprechernotizen zur schnellen</div>
<div class=t style="left:382.64px;top:167.76px;font-size:9.50px;transform:scaleX(0.8707);color:#5a5a5a;">Bezugnahme während einer</div>
<div class=t style="left:382.63px;top:180.16px;font-size:9.50px;transform:scaleX(0.8779);color:#5a5a5a;">Präsentation hinzu.</div>
<div class=t style="left:382.63px;top:205.06px;font-size:9.50px;transform:scaleX(0.8808);color:#5a5a5a;">Der Bereich wird unterhalb der</div>
<div class=t style="left:382.96px;top:217.46px;font-size:9.50px;transform:scaleX(0.8822);color:#5a5a5a;">aktuellen Folie in den</div>
<div class=t style="left:382.63px;top:229.86px;font-size:9.50px;transform:scaleX(0.8840);color:#5a5a5a;">Präsentationsansichten &quot;Normal&quot;</div>
<div class=t style="left:382.79px;top:242.26px;font-size:9.50px;transform:scaleX(0.8950);color:#5a5a5a;">und &quot;Gliederung&quot; angezeigt sowie</div>
<div class=t style="left:382.80px;top:254.66px;font-size:9.50px;transform:scaleX(0.8830);color:#5a5a5a;">neben der aktuellen Folie in der</div>
<div class=t style="left:382.65px;top:267.06px;font-size:9.50px;transform:scaleX(0.8561);color:#5a5a5a;">Referentenansicht.</div>
 </div>
</div>

<svg class=a style="left:0;top:0" width="768" height="432" viewBox="0 0 768 432">
 <ellipse cx="390.5" cy="79.6" rx="42.5" ry="40.6" fill="none" stroke="#ec0a0e" stroke-width="4.5"/>
 <ellipse cx="517.1" cy="419.2" rx="41.9" ry="11" fill="none" stroke="#ec0a0e" stroke-width="4.1"/>
 <path d="M389.6 90.3 v12.4 l2.9 -2.7 l1.9 4.2 l1.6 -0.8 l-1.9 -4.1 h3.9z" fill="#fff" stroke="#111" stroke-width="0.8" stroke-linejoin="round"/>
</svg>
</body></html>
